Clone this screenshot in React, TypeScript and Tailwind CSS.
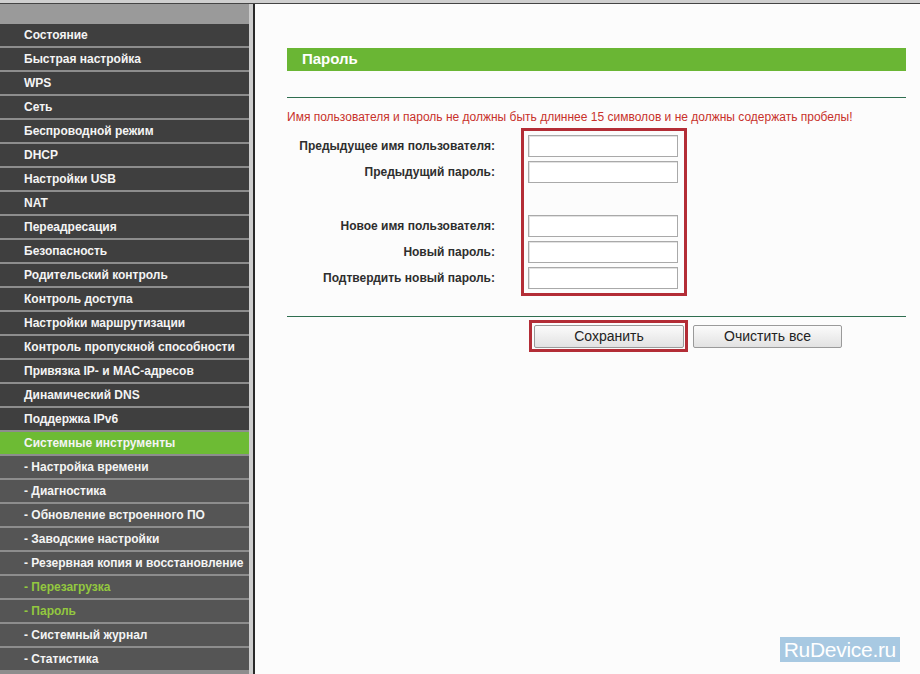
const menu: { label: string; sub?: boolean; active?: boolean; current?: boolean }[] = [
  { label: "Состояние" },
  { label: "Быстрая настройка" },
  { label: "WPS" },
  { label: "Сеть" },
  { label: "Беспроводной режим" },
  { label: "DHCP" },
  { label: "Настройки USB" },
  { label: "NAT" },
  { label: "Переадресация" },
  { label: "Безопасность" },
  { label: "Родительский контроль" },
  { label: "Контроль доступа" },
  { label: "Настройки маршрутизации" },
  { label: "Контроль пропускной способности" },
  { label: "Привязка IP- и MAC-адресов" },
  { label: "Динамический DNS" },
  { label: "Поддержка IPv6" },
  { label: "Системные инструменты", active: true },
  { label: "- Настройка времени", sub: true },
  { label: "- Диагностика", sub: true },
  { label: "- Обновление встроенного ПО", sub: true },
  { label: "- Заводские настройки", sub: true },
  { label: "- Резервная копия и восстановление", sub: true },
  { label: "- Перезагрузка", sub: true, current: true },
  { label: "- Пароль", sub: true, current: true },
  { label: "- Системный журнал", sub: true },
  { label: "- Статистика", sub: true },
];

function MenuRow({ item }: { item: (typeof menu)[number] }) {
  let bg = "bg-[#3f3f3f]";
  if (item.active) bg = "bg-[#6dbb34]";
  else if (item.sub) bg = "bg-[#555555]";
  const color = item.current ? "text-[#93c83f]" : "text-[#f4f4f4]";
  return (
    <div className={`h-[24px] border-b-2 border-[#8d8d8d] ${bg} flex items-center pl-[24px]`}>
      <span className={`text-[12px] font-bold ${color} whitespace-nowrap`}>{item.label}</span>
    </div>
  );
}

const Field = () => (
  <div className="h-[22px] w-[150px] border border-[#a9a9a9] bg-white shadow-[inset_1px_1px_0_#e2e2e2]" />
);

const Label = ({ text }: { text: string }) => (
  <div className="h-[22px] flex items-center justify-end text-[12px] font-bold text-[#2e2e2e] whitespace-nowrap">
    {text}
  </div>
);

export default function App() {
  return (
    <div
      className="w-[920px] h-[674px] overflow-hidden flex flex-col bg-[#fcfcfc]"
      style={{ fontFamily: '"Liberation Sans", Arial, sans-serif' }}
    >
      <div className="h-[3px] bg-[#cfcfcf]" />
      <div className="h-[1px] bg-[#444]" />
      <div className="flex flex-1 min-h-0">
        <div className="w-[249px] flex flex-col bg-[#8d8d8d]">
          <div className="h-[20px] bg-[#9a9a9a]" />
          {menu.map((m) => (
            <MenuRow key={m.label} item={m} />
          ))}
        </div>
        <div className="w-[4px] bg-[#cdcdcd]" />
        <div className="w-[2px] bg-[#2a2a2a]" />
        <div className="relative flex-1 pl-[32px] pr-[14px] pt-[44px] bg-[#fcfcfc]">
          <div className="h-[23px] bg-[#6ab634] flex items-center pl-[15px]">
            <span className="text-white font-bold text-[15px]">Пароль</span>
          </div>
          <div className="mt-[26px] h-[1px] bg-[#2f6e50]" />
          <div className="mt-[12px] text-[12px] leading-[14px] text-[#c8312b] whitespace-nowrap">
            Имя пользователя и пароль не должны быть длиннее 15 символов и не должны содержать пробелы!
          </div>
          <div className="mt-[4px] flex">
            <div className="w-[234px] pr-[26px] pt-[7px] flex flex-col gap-[4px]">
              <Label text="Предыдущее имя пользователя:" />
              <Label text="Предыдущий пароль:" />
              <div className="h-[24px]" />
              <Label text="Новое имя пользователя:" />
              <Label text="Новый пароль:" />
              <Label text="Подтвердить новый пароль:" />
            </div>
            <div className="w-[166px] border-[3px] border-[#b32d36] pt-[4px] pb-[4px] pl-[4px] flex flex-col gap-[4px]">
              <Field />
              <Field />
              <div className="h-[24px]" />
              <Field />
              <Field />
              <Field />
            </div>
          </div>
          <div className="mt-[20px] h-[1px] bg-[#2f6e50]" />
          <div className="mt-[3px] flex items-center pl-[242px] gap-[5px]">
            <div className="border-[3px] border-[#b32d36] py-[1px] pl-[2px] pr-[1px]">
              <button className="h-[23px] w-[150px] border border-[#9a9a9a] rounded-[2px] bg-gradient-to-b from-[#fbfbfb] to-[#e2e2e2] text-[14px] text-[#222]">
                Сохранить
              </button>
            </div>
            <button className="h-[23px] w-[149px] border border-[#9a9a9a] rounded-[2px] bg-gradient-to-b from-[#fbfbfb] to-[#e2e2e2] text-[14px] text-[#222]">
              Очистить все
            </button>
          </div>
          <div className="absolute right-[20px] bottom-[12px] h-[25px] px-[4px] bg-[#a8c9e2] flex items-center">
            <span className="text-white text-[21px] leading-none tracking-[-0.3px]">RuDevice.ru</span>
          </div>
        </div>
      </div>
    </div>
  );
}
